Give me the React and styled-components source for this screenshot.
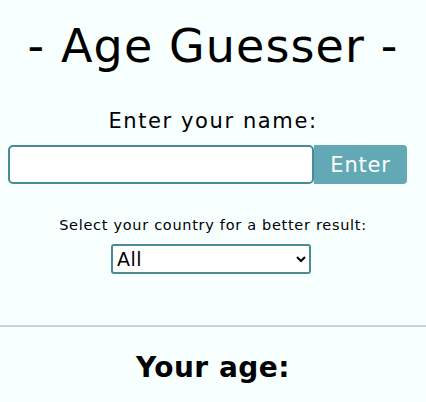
import React, { useState } from 'react';
import styled, { createGlobalStyle } from 'styled-components';

const GlobalStyle = createGlobalStyle`
  html, body {
    margin: 0;
    padding: 0;
    background: #f7ffff;
  }

  body {
    font-family: 'DejaVu Sans', 'Noto Sans', sans-serif;
    color: #000;
  }
`;

const countries = ['All', 'United States', 'United Kingdom', 'France', 'Germany', 'Spain', 'Italy'];

const App = () => {
  const [name, setName] = useState('');
  const [country, setCountry] = useState('All');

  return (
    <>
      <GlobalStyle />
      <StyledPage>
        <Title>- Age Guesser -</Title>

        <NameLabel htmlFor="name">Enter your name:</NameLabel>
        <NameForm onSubmit={(e) => e.preventDefault()}>
          <NameInput id="name" value={name} onChange={(e) => setName(e.target.value)} />
          <SubmitButton type="submit">Enter</SubmitButton>
        </NameForm>

        <CountryLabel htmlFor="country">Select your country for a better result:</CountryLabel>
        <CountrySelect id="country" value={country} onChange={(e) => setCountry(e.target.value)}>
          {countries.map((c) => (
            <option key={c} value={c}>
              {c}
            </option>
          ))}
        </CountrySelect>
      </StyledPage>

      <Divider />

      <Result>
        <ResultTitle>Your age:</ResultTitle>
      </Result>
    </>
  );
};

const StyledPage = styled.main`
  display: flex;
  flex-direction: column;
  align-items: center;
  padding-top: 18px;
`;

const Title = styled.h1`
  margin: 0;
  font-size: 46px;
  font-weight: 400;
  line-height: 56px;
  letter-spacing: 1.1px;
`;

const NameLabel = styled.label`
  margin-top: 33px;
  font-size: 21px;
  line-height: 28px;
  letter-spacing: 1.6px;
`;

const NameForm = styled.form`
  display: flex;
  align-self: flex-start;
  width: 399px;
  height: 39px;
  margin: 10px 0 0 8px;
`;

const NameInput = styled.input`
  flex: 1;
  min-width: 0;
  box-sizing: border-box;
  height: 100%;
  border: 2px solid #4b8b93;
  border-radius: 5px;
  background: #fff;
  font-family: inherit;
  font-size: 18px;
  padding: 0 8px;
  outline: none;
`;

const SubmitButton = styled.button`
  width: 93px;
  height: 100%;
  border: none;
  border-radius: 0 4px 4px 0;
  background: #62a9b5;
  color: #fff;
  font-family: inherit;
  font-size: 21px;
  letter-spacing: 0.8px;
  cursor: pointer;
`;

const CountryLabel = styled.label`
  margin-top: 31px;
  font-size: 14.5px;
  line-height: 20px;
  letter-spacing: 0.7px;
`;

const CountrySelect = styled.select`
  box-sizing: border-box;
  width: 200px;
  height: 30px;
  margin: 9px 4px 0 0;
  border: 2px solid #4b8b93;
  border-radius: 3px;
  background: #fff;
  font-family: inherit;
  font-size: 19px;
  letter-spacing: 0.5px;
  color: #000;
`;

const Divider = styled.hr`
  margin: 51px 0 0;
  border: none;
  border-top: 2px solid #cfd3d3;
`;

const Result = styled.section`
  display: flex;
  justify-content: center;
  padding-top: 24px;
`;

const ResultTitle = styled.h2`
  margin: 0;
  font-size: 28px;
  font-weight: 700;
  line-height: 34px;
  letter-spacing: 0.5px;
`;

export default App;
